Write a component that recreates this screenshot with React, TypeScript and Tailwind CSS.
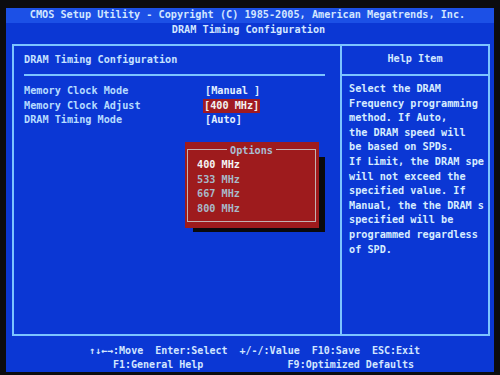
import React from "react";

const helpLines = [
  "Select the DRAM",
  "Frequency programming",
  "method. If Auto,",
  "the DRAM speed will",
  "be based on SPDs.",
  "If Limit, the DRAM spe",
  "will not exceed the",
  "specified value. If",
  "Manual, the the DRAM s",
  "specified will be",
  "programmed regardless",
  "of SPD.",
];

const rows = [
  { label: "Memory Clock Mode", value: "[Manual ]", active: false },
  { label: "Memory Clock Adjust", value: "[400 MHz]", active: true },
  { label: "DRAM Timing Mode", value: "[Auto]", active: false },
];

const options = ["400 MHz", "533 MHz", "667 MHz", "800 MHz"];

function OptionsPopup() {
  return (
    <>
      {/* drop shadow */}
      <div className="absolute left-[179px] top-[111px] w-[132px] h-[75px] bg-[#0a0a0c]" />
      <div className="absolute left-[171px] top-[96px] w-[134px] h-[86px] bg-[#9e1b1d] pt-[7px] pl-[2px] pr-[3px] pb-[6px]">
        <div className="h-full border border-[#c4b2b2]">
          <div className="flex justify-center -mt-[6px] leading-[14.3px]">
            <span className="bg-[#9e1b1d] px-[3px] text-[#a9bdd2]">Options</span>
          </div>
          <div className="pl-[9px] leading-[14.4px]">
            {options.map((o, i) => (
              <div key={o} className={i === 0 ? "text-[#f4f4f4]" : "text-[#a8b9c9]"}>
                {o}
              </div>
            ))}
          </div>
        </div>
      </div>
    </>
  );
}

export default function App() {
  return (
    <div className="w-[500px] h-[375px] bg-[#0c0c0f] pt-[8px] pl-[6px] pr-[6px] pb-[3px] font-['DejaVu_Sans_Mono',monospace] text-[10.2px] font-bold">
      <div className="h-full flex flex-col bg-[#0b37d4]">
        <div className="h-[15px] bg-[#1c50e6] text-[#d2e6ff] flex items-center justify-center pr-[5px] whitespace-pre leading-none">
          CMOS Setup Utility - Copyright (C) 1985-2005, American Megatrends, Inc.
        </div>
        <div className="h-[15px] text-[#d2e6ff] flex items-center justify-center pr-[3px] leading-none">
          DRAM Timing Configuration
        </div>

        <div className="mt-[6px] ml-[6px] mr-[4px] h-[292px] border-2 border-[#7cc4ff] flex">
          <div className="w-[328px] border-r-2 border-[#7cc4ff] relative">
            <div className="h-[28px] pt-[7px] pl-[10px] text-[#c6e2ff] leading-[14.6px]">
              DRAM Timing Configuration
            </div>
            <div className="ml-[10px] w-[301px] h-[2px] bg-[#7cc4ff]" />
            <div className="pt-[8px] pl-[10px] leading-[14.6px]">
              {rows.map((r) => (
                <div key={r.label} className="flex">
                  <div className="w-[181px] text-[#b6dcff]">{r.label}</div>
                  <div
                    className={
                      r.active
                        ? "bg-[#a01a22] text-[#f2f2f2] whitespace-pre -ml-[2px] px-[1px]"
                        : "text-[#e2f0ff] whitespace-pre"
                    }
                  >
                    {r.value}
                  </div>
                </div>
              ))}
            </div>
            <OptionsPopup />
          </div>

          <div className="flex-1 flex flex-col">
            <div className="h-[30px] border-b-2 border-[#7cc4ff] flex items-center justify-center text-[#d2e8ff] pb-[3px]">
              Help Item
            </div>
            <div className="pt-[6px] pl-[7px] leading-[14.6px] text-[#d6ecff] whitespace-pre">
              {helpLines.map((l, i) => (
                <div key={i}>{l}</div>
              ))}
            </div>
          </div>
        </div>

        <div className="flex-1 pt-[8px] text-[10px] leading-[13.5px] text-[#d2e6ff] whitespace-pre">
          <div className="pl-[83px]">↑↓←→:Move  Enter:Select  +/-/:Value  F10:Save  ESC:Exit</div>
          <div className="pl-[107px]">F1:General Help              F9:Optimized Defaults</div>
        </div>
      </div>
    </div>
  );
}
